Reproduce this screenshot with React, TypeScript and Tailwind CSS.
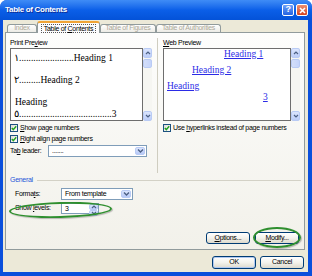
import React from 'react';

// XP-style Word "Table of Contents" dialog

function Chevron() {
  return (
    <svg width="7" height="6" viewBox="0 0 7 6">
      <path d="M1 1.5 L3.5 4 L6 1.5" fill="none" stroke="#4d6185" strokeWidth="1.4" />
    </svg>
  );
}

function ArrowBtn({ dir, className = '' }: { dir: 'up' | 'down'; className?: string }) {
  return (
    <div
      className={`flex items-center justify-center rounded-[2px] border border-[#b9cbf5] bg-linear-to-b from-[#dbe5fd] to-[#bccdf8] ${className}`}
    >
      <svg width="6" height="4" viewBox="0 0 6 4">
        <path
          d={dir === 'up' ? 'M1 3 L3 1 L5 3' : 'M1 1 L3 3 L5 1'}
          fill="none"
          stroke="#4d6185"
          strokeWidth="1.2"
        />
      </svg>
    </div>
  );
}

function ScrollBar() {
  return (
    <div className="flex w-[9px] flex-col bg-[#f6f6f2]">
      <ArrowBtn dir="up" className="h-[10px]" />
      <div className="mt-[1px] h-[9px] rounded-[2px] border border-[#b9cbf5] bg-linear-to-r from-[#d3def9] to-[#c5d4fa]" />
      <div className="flex-1" />
      <ArrowBtn dir="down" className="h-[10px]" />
    </div>
  );
}

function CheckBox({ children }: { children: React.ReactNode }) {
  return (
    <div className="flex h-[8px] items-center">
      <div className="flex h-[8px] w-[8px] items-center justify-center border border-[#1c5180] bg-linear-to-br from-[#dcdcd4] to-white">
        <svg width="6" height="6" viewBox="0 0 6 6">
          <path d="M0.8 3 L2.3 4.6 L5.2 1.2" fill="none" stroke="#21a121" strokeWidth="1.4" />
        </svg>
      </div>
      <span className="ml-[2px] leading-[8px]">{children}</span>
    </div>
  );
}

function ComboBox({ value, className = '' }: { value: string; className?: string }) {
  return (
    <div className={`flex h-[12px] items-stretch border border-[#7f9db9] bg-white ${className}`}>
      <span className="flex-1 pl-[3px] leading-[10px]">{value}</span>
      <div className="m-[1px] flex w-[10px] items-center justify-center rounded-[2px] border border-[#b9cbf5] bg-linear-to-b from-[#dbe5fd] to-[#b7c9f7]">
        <Chevron />
      </div>
    </div>
  );
}

function XPButton({
  children,
  isDefault = false,
  className = '',
}: {
  children: React.ReactNode;
  isDefault?: boolean;
  className?: string;
}) {
  return (
    <div
      className={`flex w-[44px] items-center justify-center rounded-[3px] border border-[#003c74] bg-linear-to-b from-white via-[#f3f2ec] to-[#dcd9cc] ${
        isDefault ? 'shadow-[inset_0_0_0_1px_#b0c8f0]' : ''
      } ${className}`}
    >
      {children}
    </div>
  );
}

function Tab({ children, w }: { children: React.ReactNode; w: string }) {
  return (
    <div
      className={`mb-[1px] flex h-[8px] items-center justify-center rounded-t-[3px] border border-b-0 border-[#919b9c] bg-linear-to-b from-white to-[#ecebe5] text-[#aca899] ${w}`}
    >
      {children}
    </div>
  );
}

export default function App() {
  return (
    <div className="flex h-[276px] w-[312px] flex-col overflow-hidden rounded-t-[7px] bg-[#0a4fdc] font-['Liberation_Sans',Arial,sans-serif] text-[7px] tracking-[-0.3px] text-black">
      {/* Title bar */}
      <div className="flex h-[20px] items-center bg-linear-to-b from-[#3f8cf6] via-[#0b5fe8] to-[#0452d8] pl-[5px] pr-[4px]">
        <span className="flex-1 text-[8px] font-bold text-white [text-shadow:1px_1px_#0c2f9a]">
          Table of Contents
        </span>
        <div className="flex h-[12px] w-[12px] items-center justify-center rounded-[2px] border border-white bg-linear-to-b from-[#6ea0f8] to-[#2462e2] text-[9px] font-bold text-white">
          ?
        </div>
        <div className="ml-[2px] flex h-[12px] w-[12px] items-center justify-center rounded-[2px] border border-white bg-linear-to-b from-[#ec8e70] to-[#d6431d]">
          <svg width="7" height="7" viewBox="0 0 7 7">
            <path d="M1 1 L6 6 M6 1 L1 6" stroke="white" strokeWidth="1.6" />
          </svg>
        </div>
      </div>

      {/* Body */}
      <div className="mx-[3px] mb-[4px] mr-[4px] flex flex-1 flex-col bg-[#ece9d8]">
        {/* Tabs */}
        <div className="relative z-10 flex h-[13px] items-end pl-[4px]">
          <Tab w="w-[30px]">Index</Tab>
          <div className="flex h-[12px] w-[63px] items-center justify-center rounded-t-[3px] border border-b-0 border-[#919b9c] border-t-2 border-t-[#f0a436] bg-[#fcfcfd]">
            <span className="border border-dotted border-[#555] px-[2px] leading-[7px]">
              Table of <u>C</u>ontents
            </span>
          </div>
          <Tab w="w-[56px]">Table of Figures</Tab>
          <Tab w="w-[65px]">Table of Authorities</Tab>
        </div>

        {/* Panel */}
        <div className="ml-[2px] mr-[3px] mt-[-1px] flex h-[218px] flex-col border border-[#919b9c] bg-linear-to-b from-[#fdfdfc] to-[#f2f1ea]">
          <div className="flex h-[140px] pt-[5px]">
            {/* Print preview */}
            <div className="ml-[4px] flex w-[142px] flex-col">
              <div className="h-[10px] leading-[10px]">
                Print Pre<u>v</u>iew
              </div>
              <div className="flex h-[73px]">
                <div className="w-[133px] overflow-hidden border border-[#6e6e6e] bg-white font-['Liberation_Serif','DejaVu_Serif',serif] text-[9.5px] leading-[12px] tracking-normal">
                  <div className="mt-[3px] flex pl-[3px] whitespace-nowrap">
                    <span>١</span>
                    <span>{'.'.repeat(23)}</span>
                    <span>Heading 1</span>
                  </div>
                  <div className="mt-[10px] flex pl-[3px] whitespace-nowrap">
                    <span>٢</span>
                    <span>{'.'.repeat(9)}</span>
                    <span>Heading 2</span>
                  </div>
                  <div className="mt-[10px] pl-[4px] whitespace-nowrap">Heading</div>
                  <div className="flex pl-[3px] whitespace-nowrap">
                    <span>٥</span>
                    <span>{'.'.repeat(39)}</span>
                    <span>3</span>
                  </div>
                </div>
                <ScrollBar />
              </div>
              <div className="mt-[3px]">
                <CheckBox>
                  <u>S</u>how page numbers
                </CheckBox>
              </div>
              <div className="mt-[3px]">
                <CheckBox>
                  <u>R</u>ight align page numbers
                </CheckBox>
              </div>
              <div className="mt-[2px] flex items-center">
                <span className="w-[38px]">
                  Ta<u>b</u> leader:
                </span>
                <ComboBox value="......." className="w-[99px]" />
              </div>
            </div>

            <div className="ml-[5px] h-[135px] w-px bg-[#cfcdc0]" />

            {/* Web preview */}
            <div className="ml-[5px] flex w-[137px] flex-col">
              <div className="h-[10px] leading-[10px]">
                <u>W</u>eb Preview
              </div>
              <div className="flex h-[73px]">
                <div className="w-[128px] overflow-hidden border border-[#6e6e6e] bg-white font-['Liberation_Serif','DejaVu_Serif',serif] text-[9.5px] leading-[11px] tracking-normal text-[#2b2be6] underline">
                  <div className="pl-[60px]">Heading 1</div>
                  <div className="mt-[5px] pl-[28px]">Heading 2</div>
                  <div className="mt-[5px] pl-[3px]">Heading</div>
                  <div className="pl-[99px]">3</div>
                </div>
                <ScrollBar />
              </div>
              <div className="mt-[3px]">
                <CheckBox>
                  Use <u>h</u>yperlinks instead of page numbers
                </CheckBox>
              </div>
            </div>
          </div>

          {/* General */}
          <div className="mt-[2px] flex h-[10px] items-center pl-[4px] pr-[3px]">
            <span className="leading-[10px] text-[#1f55d8]">General</span>
            <div className="ml-[4px] h-px flex-1 bg-[#d3d1c6]" />
          </div>
          <div className="mt-[3px] flex items-center pl-[9px]">
            <span className="w-[46px]">
              Forma<u>t</u>s:
            </span>
            <ComboBox value="From template" className="w-[72px]" />
          </div>
          <div className="relative mt-[3px] flex items-center pl-[9px]">
            <span className="w-[46px]">
              Show <u>l</u>evels:
            </span>
            <div className="flex h-[11px] w-[38px] items-stretch border border-[#7f9db9] bg-white">
              <span className="flex-1 pl-[3px] leading-[9px]">3</span>
              <div className="flex w-[9px] flex-col">
                <ArrowBtn dir="up" className="flex-1" />
                <ArrowBtn dir="down" className="flex-1" />
              </div>
            </div>
            <div className="absolute left-[3px] top-[-1px] h-[16px] w-[103px] rotate-[-1.5deg] rounded-[50%] border-2 border-[#2f8f2f] shadow-[1px_1px_1px_rgba(0,0,0,0.25)]" />
          </div>

          <div className="mb-[5px] mt-auto flex justify-end gap-[5px] pr-[5px]">
            <XPButton className="h-[12px]">
              <u>O</u>ptions...
            </XPButton>
            <div className="relative">
              <XPButton className="h-[12px]">
                <u>M</u>odify...
              </XPButton>
              <div className="absolute left-[-2px] top-[-5px] h-[21px] w-[48px] rounded-[50%] border-2 border-[#2f8f2f] shadow-[1px_1px_1px_rgba(0,0,0,0.25)]" />
            </div>
          </div>
        </div>

        {/* OK / Cancel */}
        <div className="mt-[6px] flex justify-end gap-[4px] pr-[4px]">
          <XPButton isDefault className="h-[13px]">
            OK
          </XPButton>
          <XPButton className="h-[13px]">Cancel</XPButton>
        </div>
      </div>
    </div>
  );
}
